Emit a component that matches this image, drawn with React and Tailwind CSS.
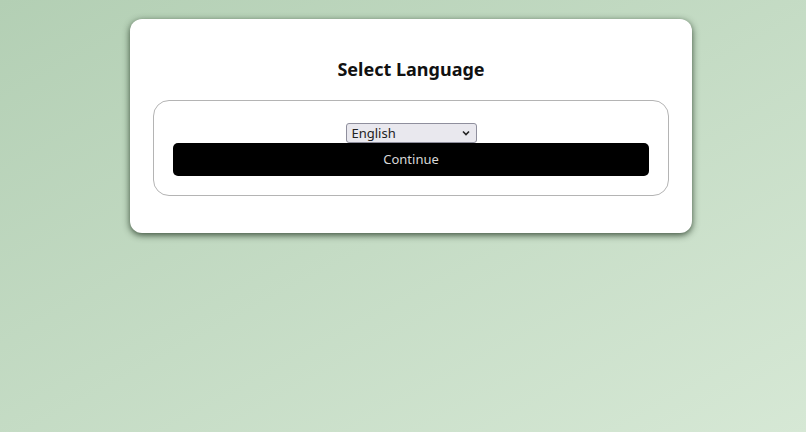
import { useState } from 'react';

export default function App() {
  const [lang, setLang] = useState('en');

  return (
    <div
      className="min-h-screen w-full bg-gradient-to-br from-[#b3cfb4] to-[#d6e8d5] pt-[19px]"
      style={{ fontFamily: '"Noto Sans", "Open Sans", sans-serif' }}
    >
      <div className="ml-[130px] w-[562px] h-[214px] bg-white rounded-[12px] shadow-[0_2px_7px_rgba(30,50,30,0.85)] px-[23px] pt-[38px]">
        <h2 className="text-center text-[18px] font-bold text-[#111] leading-[24px]">Select Language</h2>

        {/* Caja del selector */}
        <div className="mt-[19px] h-[96px] border-[1.5px] border-[#b4b4b4] rounded-[16px] px-[19px] pt-[22px] flex flex-col items-center">
          <div className="relative w-[131px] h-[20px] flex">
            <select
              value={lang}
              onChange={e => setLang(e.target.value)}
              className="appearance-none block w-full h-[20px] text-[13px] leading-[18px] bg-[#e9e8ee] border border-[#8f8f9d] rounded-[3px] pl-[5px] pr-[18px] py-0 text-[#222]"
              style={{ fontFamily: '"Noto Sans", sans-serif' }}
            >
              <option value="en">English</option>
              <option value="es">Español</option>
            </select>
            <svg className="pointer-events-none absolute right-[7px] top-[7px]" width="8" height="6" viewBox="0 0 8 6">
              <path d="M1 1.5 L4 4.5 L7 1.5" fill="none" stroke="#222" strokeWidth="1.6" />
            </svg>
          </div>
          <button className="w-full h-[33px] bg-black text-[#d8d8d8] text-[13px] rounded-[5px]">
            Continue
          </button>
        </div>
      </div>
    </div>
  );
}
